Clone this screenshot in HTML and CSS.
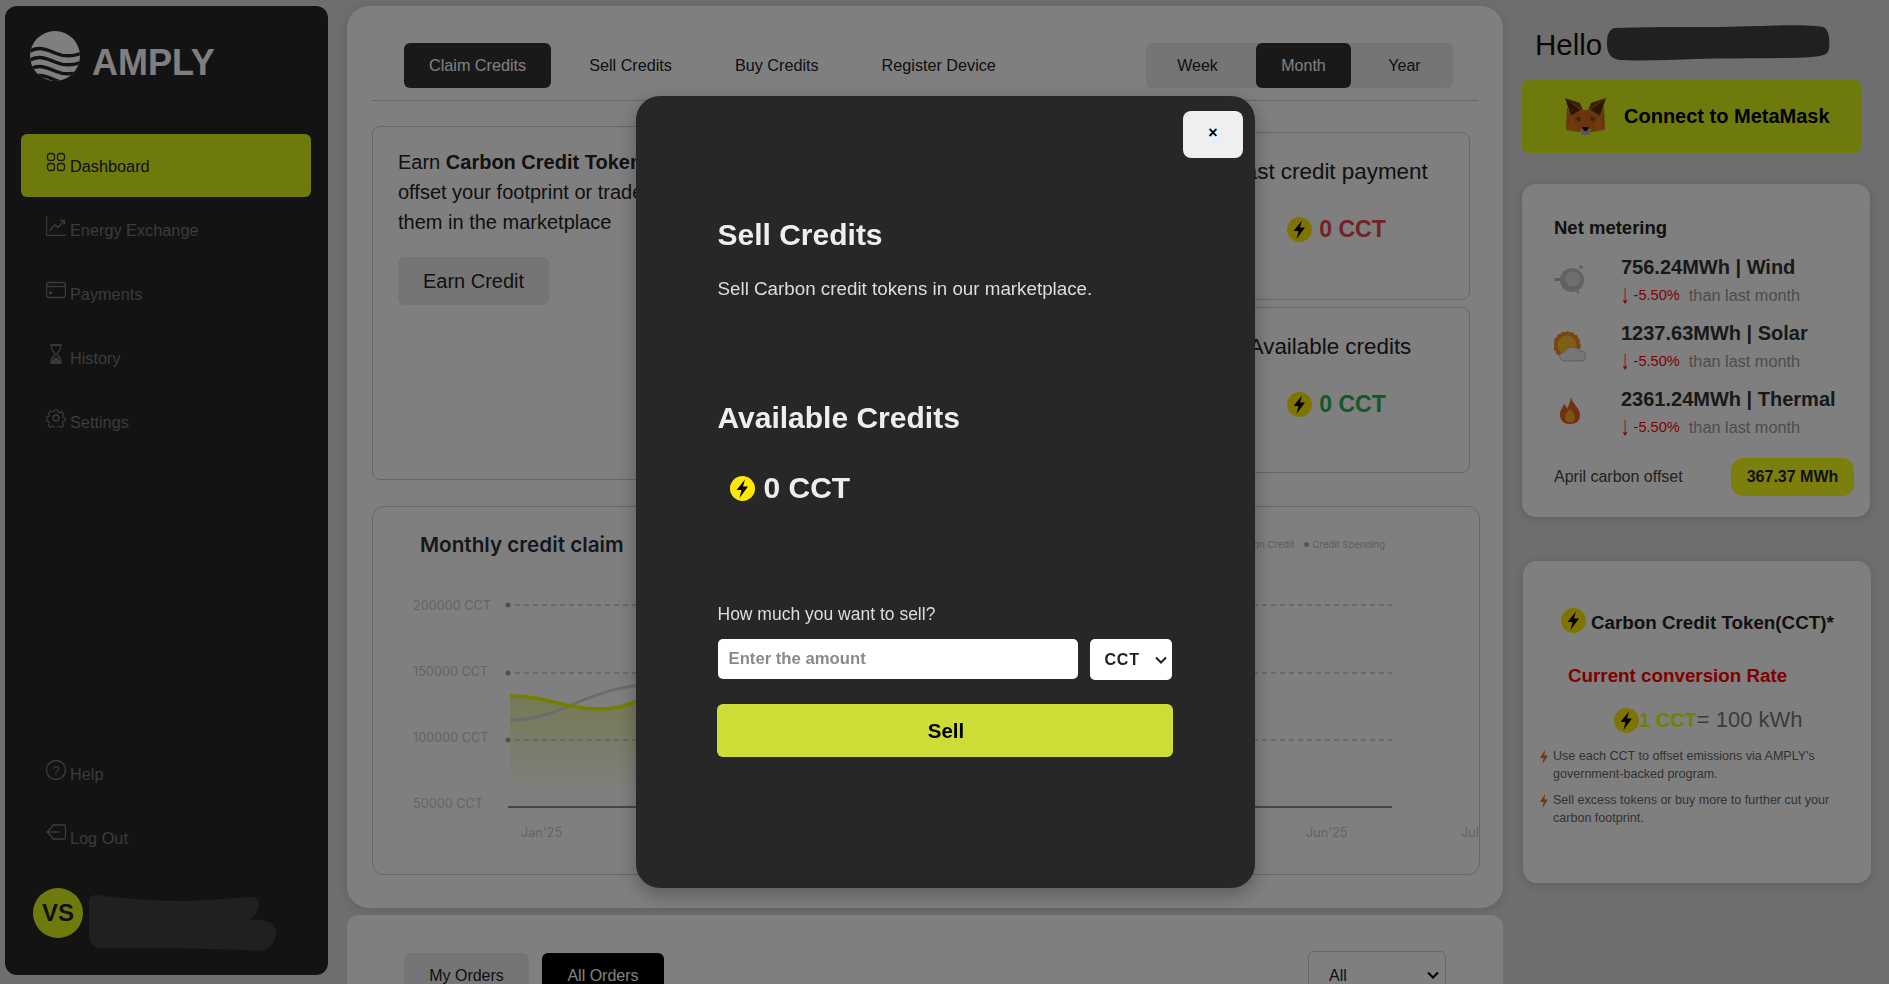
FILE: index.html
```html
<!DOCTYPE html>
<html lang="en">
<head>
    <title>AMPLY Dashboard</title>
    <link rel="stylesheet" href="styles.css">
</head>
<body>

    <aside class="sidebar">
        <div class="brand">
            <svg class="brand-logo" viewBox="0 0 50 50">
                <defs><clipPath id="logoclip"><circle cx="25" cy="25" r="25"/></clipPath></defs>
                <g clip-path="url(#logoclip)">
                    <rect width="50" height="50" fill="#fff"/>
                    <path d="M-2 21 C8 15 16 18 25 22 C34 26 42 26 52 22" class="logo-wave"/>
                    <path d="M-2 30 C8 24 16 27 25 31 C34 35 42 35 52 31" class="logo-wave"/>
                    <path d="M-2 39 C8 33 16 36 25 40 C34 44 42 44 52 40" class="logo-wave"/>
                    <path d="M-2 48 C8 42 16 45 25 49 C34 53 42 53 52 49" class="logo-wave"/>
                </g>
            </svg>
            <span class="brand-name">AMPLY</span>
        </div>

        <nav class="nav">
            <a class="nav-item active">
                <svg class="nav-icon" viewBox="0 0 20 20"><rect x="1.5" y="1.5" width="7" height="7" rx="2.5"/><rect x="11.5" y="1.5" width="7" height="7" rx="2.5"/><rect x="1.5" y="11.5" width="7" height="7" rx="2.5"/><rect x="11.5" y="11.5" width="7" height="7" rx="2.5"/></svg>
                Dashboard
            </a>
            <a class="nav-item">
                <svg class="nav-icon" viewBox="0 0 20 20"><path d="M.5 0V19.5H20"/><path d="M3.5 15L9 8.5l3 3L18 5"/><path d="M14.5 4.5H18.5V8.5"/></svg>
                Energy Exchange
            </a>
            <a class="nav-item">
                <svg class="nav-icon" viewBox="0 0 20 20"><rect x=".5" y="2.5" width="19" height="15" rx="2.5"/><path d="M.5 6.5H19.5"/><rect x="3" y="11.5" width="3" height="2.5" class="icon-solid"/></svg>
                Payments
            </a>
            <a class="nav-item">
                <svg class="nav-icon" viewBox="0 0 20 20"><path d="M4 1H16M4 19H16"/><path d="M5.5 1V4C5.5 7 9 8.500 9 10C9 11.500 5.500 13 5.500 16V19H14.500V16C14.500 13 11 11.500 11 10C11 8.500 14.500 7 14.500 4V1Z"/><path d="M6 18.500C6 15.500 9 14 10 13C11 14 14 15.500 14 18.500Z" class="icon-solid"/></svg>
                History
            </a>
            <a class="nav-item">
                <svg class="nav-icon" viewBox="0 0 20 20"><circle cx="10" cy="10" r="3"/><path d="M8.300 .8h3.400l.5 2.600 1.700.8 2.300-1.300 2.300 2.500-1.400 2.200.6 1.800 2.500.7v3.400l-2.500.6-.7 1.800 1.300 2.200-2.400 2.400-2.200-1.300-1.800.7-.6 2.300H8.300l-.6-2.400-1.700-.7-2.200 1.300-2.400-2.400 1.300-2.200-.7-1.700-2.300-.6V8.900l2.400-.6.700-1.800L1.500 4.400l2.400-2.500 2.200 1.300 1.700-.8z" transform="translate(1 1) scale(.9)"/></svg>
                Settings
            </a>
        </nav>

        <div class="sidebar-bottom">
            <a class="nav-item">
                <svg class="nav-icon" viewBox="0 0 20 20"><circle cx="10" cy="10" r="9.500"/><text x="10" y="14.500" class="help-mark">?</text></svg>
                Help
            </a>
            <a class="nav-item">
                <svg class="nav-icon" viewBox="0 0 20 20"><path d="M6 4V2.500C6 1.500 6.500 1 7.500 1H18C19 1 19.500 1.500 19.500 2.500V13.500C19.500 14.500 19 15 18 15H7.500C6.500 15 6 14.500 6 13.500V12"/><path d="M13 8H1M5 4L1 8l4 4"/></svg>
                Log Out
            </a>
            <div class="profile">
                <div class="avatar">VS</div>
                <svg class="redact-name" viewBox="0 0 189 56"><path d="M8 0C40 4 70 6 100 6C130 5 150 2 165 2C170 2 172 8 170 14C168 20 164 24 158 25C175 24 187 26 188 36C189 48 180 56 170 56C150 54 100 54 70 53C40 53 20 54 10 53C4 52 1 46 1 38V8C1 3 3 0 8 0Z"/></svg>
            </div>
        </div>
    </aside>

    <main class="content">
        <section class="main-card">
            <div class="tabs-row">
                <div class="tabs">
                    <button class="tab tab-active">Claim Credits</button>
                    <button class="tab">Sell Credits</button>
                    <button class="tab">Buy Credits</button>
                    <button class="tab">Register Device</button>
                </div>
                <div class="period">
                    <button class="period-btn period-week">Week</button>
                    <button class="period-btn period-month">Month</button>
                    <button class="period-btn period-year">Year</button>
                </div>
            </div>

            <div class="top-grid">
                <div class="earn-card">
                    <p class="earn-text">Earn <b>Carbon Credit Tokens</b> to<br>offset your footprint or trade<br>them in the marketplace</p>
                    <button class="earn-btn">Earn Credit</button>
                </div>
                <div class="stat-col">
                    <div class="stat-card stat-first">
                        <p class="stat-title">Last credit payment</p>
                        <div class="stat-value red">
                            <svg class="bolt" viewBox="0 0 25 25"><circle cx="12.500" cy="12.500" r="12.500" fill="#ffe900"/><path d="M15 3.500L6.500 14H11.500L9.500 22L18 10.500H13Z"/></svg>
                            0 CCT
                        </div>
                    </div>
                    <div class="stat-card">
                        <p class="stat-title">Available credits</p>
                        <div class="stat-value green">
                            <svg class="bolt" viewBox="0 0 25 25"><circle cx="12.500" cy="12.500" r="12.500" fill="#ffe900"/><path d="M15 3.500L6.500 14H11.500L9.500 22L18 10.500H13Z"/></svg>
                            0 CCT
                        </div>
                    </div>
                </div>
            </div>

            <div class="chart-card">
                <div class="chart-head">
                    <h3 class="chart-title">Monthly credit claim</h3>
                    <div class="legend">
                        <span class="legend-dot"></span>Carbon Credit
                        <span class="legend-dot legend-gap"></span>Credit Spending
                    </div>
                </div>
                <svg class="chart" viewBox="0 0 1106 314">
                    <defs>
                        <linearGradient id="areafill" x1="0" y1="0" x2="0" y2="1">
                            <stop offset="0" stop-color="#cfe01a" stop-opacity=".45"/>
                            <stop offset="1" stop-color="#cfe01a" stop-opacity="0"/>
                        </linearGradient>
                    </defs>
                    <text x="40" y="50" class="axis">200000 CCT</text>
                    <text x="40" y="116" class="axis">150000 CCT</text>
                    <text x="40" y="182" class="axis">100000 CCT</text>
                    <text x="40" y="248" class="axis">50000 CCT</text>
                    <circle cx="135" cy="45" r="2.500" class="grid-dot"/>
                    <circle cx="135" cy="113" r="2.500" class="grid-dot"/>
                    <circle cx="135" cy="180" r="2.500" class="grid-dot"/>
                    <path d="M142 45H1019M142 113H1019M142 180H1019" class="grid-line"/>
                    <path d="M135 247H1019" class="base-line"/>
                    <path d="M137 136C175 136 190 149 228 149C255 149 275 137 300 118V234H137Z" fill="url(#areafill)"/>
                    <path d="M137 160C195 160 210 123 300 123" class="line-grey"/>
                    <path d="M137 136C175 136 190 149 228 149C255 149 275 137 300 118" class="line-green"/>
                    <text x="148" y="277" class="axis">Jan'25</text>
                    <text x="933" y="277" class="axis">Jun'25</text>
                    <text x="1088" y="277" class="axis">Jul</text>
                </svg>
            </div>
        </section>

        <section class="orders-card">
            <div class="orders-tabs">
                <button class="order-tab">My Orders</button>
                <button class="order-tab order-active">All Orders</button>
            </div>
            <select class="orders-filter"><option>All</option></select>
        </section>
    </main>

    <aside class="right">
        <div class="hello">
            <span>Hello</span>
            <svg class="redact-hello" viewBox="0 0 223 36"><path d="M8 3C60 1 100 3 150 1C180 0 205 0 216 2C222 4 223 14 222 24C221 30 215 31 205 32C170 34 120 33 90 34C60 35 30 36 12 35C3 33 0 28 0 18C0 10 2 4 8 3Z"/></svg>
        </div>

        <button class="metamask">
            <svg class="fox" viewBox="0 0 41 37">
                <path d="M41 0L23 13l3-8z" fill="#763d16"/>
                <path d="M0 0l18 13-3-8z" fill="#763d16"/>
                <path d="M0 0l6 18 10-6z" fill="#5b2c0e"/>
                <path d="M41 0l-6 18-10-6z" fill="#5b2c0e"/>
                <path d="M6 18L2 8l-1 24 6-3 7 5h13l7-5 6 3-1-24-4 10-10-6H16z" fill="#d5691a"/>
                <path d="M1 32l6-14 7 16zM40 32l-6-14-7 16z" fill="#e2761b"/>
                <path d="M10 20l6-1-2 5zM31 20l-6-1 2 5z" fill="#763d16"/>
                <path d="M14 31h13l-3 6h-7z" fill="#c0ad9e"/>
                <path d="M17 29h7l-2 4h-3z" fill="#161616"/>
            </svg>
            Connect to MetaMask
        </button>

        <section class="side-card net-card">
            <h4 class="net-title">Net metering</h4>

            <div class="net-row">
                <svg class="net-icon" viewBox="0 0 32 32"><rect x="0" y="13" width="14" height="3" rx="1.500" fill="#bbb"/><circle cx="18" cy="15" r="12" fill="#c4c4c4"/><circle cx="19" cy="14" r="7.500" fill="#dedede"/><circle cx="27" cy="2" r="2" fill="#c4c4c4"/><circle cx="24" cy="27" r="1.500" fill="#c4c4c4"/></svg>
                <div>
                    <p class="net-value">756.24MWh | Wind</p>
                    <p class="net-sub"><span class="down"><span class="arrow">↓</span> -5.50%</span><span class="than">than last month</span></p>
                </div>
            </div>

            <div class="net-row">
                <svg class="net-icon" viewBox="0 0 32 32"><circle cx="13" cy="14" r="13" fill="#f08a1e" stroke="#f08a1e" stroke-width="1.500" stroke-dasharray="3 2"/><circle cx="13" cy="14" r="9.500" fill="#fbc02d"/><path d="M11 30C4 30 4 21 11 21C13 15 24 15 26 20C33 19 34 30 27 30Z" fill="#ececf2" stroke="#bbb"/></svg>
                <div>
                    <p class="net-value">1237.63MWh | Solar</p>
                    <p class="net-sub"><span class="down"><span class="arrow">↓</span> -5.50%</span><span class="than">than last month</span></p>
                </div>
            </div>

            <div class="net-row">
                <svg class="net-icon" viewBox="0 0 32 32"><path d="M17 0C18 6 25 10 26 17C26.500 24 22 27 16 27C10 27 6 24 6 17C6 13 9 10 10 7C12 9 13 10 13 12C15 8 16 5 17 0Z" fill="#e8601c"/><path d="M16 11C17 15 21 16 21 20C21 24 19 25 16 25C13 25 11 24 11 20C11 16 15 15 16 11Z" fill="#f9a825"/></svg>
                <div>
                    <p class="net-value">2361.24MWh | Thermal</p>
                    <p class="net-sub"><span class="down"><span class="arrow">↓</span> -5.50%</span><span class="than">than last month</span></p>
                </div>
            </div>

            <div class="offset-row">
                <span>April carbon offset</span>
                <span class="offset-badge">367.37 MWh</span>
            </div>
        </section>

        <section class="side-card token-card">
            <div class="token-title">
                <svg class="bolt bolt-up" viewBox="0 0 25 25"><circle cx="12.500" cy="12.500" r="12.500" fill="#ffe900"/><path d="M15 3.500L6.500 14H11.500L9.500 22L18 10.500H13Z"/></svg>
                Carbon Credit Token(CCT)*
            </div>
            <p class="rate-title">Current conversion Rate</p>
            <div class="rate">
                <svg class="bolt" viewBox="0 0 25 25"><circle cx="12.500" cy="12.500" r="12.500" fill="#ffe900"/><path d="M15 3.500L6.500 14H11.500L9.500 22L18 10.500H13Z"/></svg>
                <b class="rate-cct">1 CCT</b>= 100 kWh
            </div>
            <ul class="token-list">
                <li>
                    <svg class="flash" viewBox="0 0 8 14"><path d="M5 0L0 8H3.500L2.500 14L8 5.500H4.500Z"/></svg>
                    <span>Use each CCT to offset emissions via AMPLY's government-backed program.</span>
                </li>
                <li>
                    <svg class="flash" viewBox="0 0 8 14"><path d="M5 0L0 8H3.500L2.500 14L8 5.500H4.500Z"/></svg>
                    <span>Sell excess tokens or buy more to further cut your carbon footprint.</span>
                </li>
            </ul>
        </section>
    </aside>

    <div class="overlay">
        <div class="modal">
            <button class="modal-close">×</button>
            <h2 class="modal-title first">Sell Credits</h2>
            <p class="modal-sub">Sell Carbon credit tokens in our marketplace.</p>
            <h2 class="modal-title second">Available Credits</h2>
            <div class="modal-amount">
                <svg class="bolt" viewBox="0 0 25 25"><circle cx="12.500" cy="12.500" r="12.500" fill="#ffe900"/><path d="M15 3.500L6.500 14H11.500L9.500 22L18 10.500H13Z"/></svg>
                0 CCT
            </div>
            <label class="modal-label">How much you want to sell?</label>
            <div class="modal-form">
                <input class="modal-input" placeholder="Enter the amount">
                <select class="modal-select"><option>CCT</option></select>
            </div>
            <button class="sell-btn">Sell</button>
        </div>
    </div>

</body>
</html>
```

FILE: styles.css
```css
* {
    box-sizing: border-box;
}
p, h2, h3, h4, ul {
    margin: 0;
    padding: 0;
}
button, select, input {
    font-family: inherit;
}
body {
    margin: 0;
    height: 100vh;
    overflow: hidden;
    display: flex;
    gap: 19px;
    padding: 6px 18px 0 5px;
    background-color: #dcdcdc;
    font-family: "Liberation Sans", Arial, sans-serif;
    color: #222;
}

/* sidebar */
.sidebar {
    width: 323px;
    flex: none;
    height: 969px;
    background-color: #262626;
    border-radius: 12px;
    padding: 25px 17px 24px 16px;
    display: flex;
    flex-direction: column;
}
.brand {
    display: flex;
    align-items: center;
    gap: 12px;
    padding-left: 9px;
    height: 50px;
    margin-bottom: 53px;
}
.brand-logo {
    width: 50px;
    height: 50px;
}
.logo-wave {
    fill: none;
    stroke: #262626;
    stroke-width: 3.5;
}
.brand-name {
    color: #fff;
    font-size: 36px;
    font-weight: bold;
    margin-top: 14px;
}
.nav {
    display: flex;
    flex-direction: column;
}
.nav-item {
    height: 63px;
    margin-bottom: 1px;
    display: flex;
    align-items: center;
    gap: 4px;
    padding: 2px 0 0 25px;
    font-size: 16.3px;
    color: #777;
    border-radius: 6px;
}
.nav-item.active {
    background-color: #def41a;
    color: #222;
}
.nav-icon {
    width: 20px;
    height: 20px;
    margin-top: -10px;
    fill: none;
    stroke: #777;
    stroke-width: 1.3;
    flex: none;
}
.active .nav-icon {
    stroke: #333;
}
.icon-solid {
    fill: #777;
    stroke: none;
}
.help-mark {
    fill: #777;
    stroke: none;
    font-size: 13px;
    text-anchor: middle;
}
.sidebar-bottom {
    margin-top: auto;
}
.profile {
    display: flex;
    align-items: flex-start;
    gap: 5px;
    margin-top: 19px;
    padding-left: 12px;
    height: 63px;
}
.avatar {
    width: 50px;
    height: 50px;
    flex: none;
    border-radius: 50%;
    background-color: #def41a;
    color: #222;
    font-size: 24px;
    font-weight: bold;
    display: flex;
    align-items: center;
    justify-content: center;
}
.redact-name {
    width: 189px;
    height: 56px;
    margin-top: 7px;
    fill: #404040;
}

/* main column */
.content {
    width: 1156px;
    flex: none;
    display: flex;
    flex-direction: column;
    gap: 7px;
}
.main-card {
    flex: none;
    height: 902px;
    background-color: #fff;
    border-radius: 22px;
    padding: 37px 25px 0;
    box-shadow: 0 2px 10px rgba(0, 0, 0, .12);
}
.tabs-row {
    display: flex;
    justify-content: space-between;
    padding: 0 25px 12px 32px;
    border-bottom: 1px solid #ccc;
}
.tabs {
    display: flex;
    gap: 13px;
}
.tab {
    height: 45px;
    padding: 0 25px;
    border: none;
    border-radius: 6px;
    background: transparent;
    color: #222;
    font-size: 16.2px;
}
.tab-active {
    background-color: #333;
    color: #fff;
}
.period {
    width: 307px;
    height: 45px;
    display: flex;
    background-color: #ebebeb;
    border-radius: 6px;
}
.period-btn {
    border: none;
    background: transparent;
    border-radius: 6px;
    color: #222;
    font-size: 16px;
}
.period-week {
    width: 110px;
    padding: 0 7px 0 0;
}
.period-month {
    width: 95px;
    background-color: #333;
    color: #fff;
}
.period-year {
    width: 102px;
    padding: 0 0 0 5px;
}
.top-grid {
    display: flex;
    gap: 10px;
    height: 354px;
    margin: 25px 8px 0 0;
}
.earn-card {
    flex: 1;
    border: 1px solid #ccc;
    border-radius: 8px;
    padding: 20px 25px;
}
.earn-text {
    font-size: 20px;
    line-height: 30px;
    color: #222;
}
.earn-btn {
    display: block;
    width: 151px;
    height: 48px;
    margin-top: 20px;
    border: none;
    border-radius: 6px;
    background-color: #ebebeb;
    color: #222;
    font-size: 20px;
}
.stat-col {
    width: 294px;
    flex: none;
    display: flex;
    flex-direction: column;
    gap: 7px;
    padding-top: 6px;
}
.stat-card {
    height: 166px;
    border: 1px solid #ccc;
    border-radius: 8px;
    padding-top: 23px;
    display: flex;
    flex-direction: column;
    align-items: center;
}
.stat-first {
    height: 168px;
}
.stat-title {
    margin-left: 14px;
    font-size: 22.4px;
    line-height: 32px;
    color: #222;
}
.stat-value {
    display: flex;
    align-items: center;
    gap: 7px;
    margin: 28px 0 0 27px;
    font-size: 23px;
    font-weight: bold;
}
.red {
    color: #e8404f;
}
.green {
    color: #28b050;
}
.bolt {
    width: 25px;
    height: 25px;
    flex: none;
}
.chart-card {
    height: 369px;
    margin: 26px -2px 0 0;
    border: 1px solid #ccc;
    border-radius: 12px;
    overflow: hidden;
}
.chart-head {
    display: flex;
    justify-content: space-between;
    align-items: center;
    padding: 24px 94px 1px 47px;
}
.chart-title {
    font-family: Inter, sans-serif;
    font-size: 20.7px;
    font-weight: 600;
    line-height: 28px;
    color: #2a2f3a;
}
.legend {
    display: flex;
    align-items: center;
    margin-top: -2px;
    font-family: Inter, sans-serif;
    font-size: 9.5px;
    color: #bbb;
}
.legend-dot {
    width: 5px;
    height: 5px;
    border-radius: 50%;
    background-color: #aaa;
    margin-right: 4px;
}
.legend-gap {
    margin-left: 9px;
}
.chart {
    display: block;
    width: 1106px;
    height: 314px;
}
.axis {
    font-family: Inter, sans-serif;
    font-size: 12.7px;
    fill: #c8c8c8;
}
.grid-dot {
    fill: #a0a0a0;
}
.grid-line {
    fill: none;
    stroke: #a8a8a8;
    stroke-dasharray: 5 4;
}
.base-line {
    stroke: #666;
    stroke-width: 1.5;
}
.line-grey {
    fill: none;
    stroke: #d8d8d8;
    stroke-width: 3;
}
.line-green {
    fill: none;
    stroke: #e8ff00;
    stroke-width: 3.5;
}
.orders-card {
    flex: none;
    height: 200px;
    background-color: #fff;
    border-radius: 12px;
    padding: 36px 57px 0;
    display: flex;
    justify-content: space-between;
    align-items: flex-start;
}
.orders-tabs {
    display: flex;
    gap: 13px;
    margin-top: 2px;
}
.order-tab {
    height: 45px;
    width: 125px;
    border: none;
    border-radius: 6px;
    background-color: #ebebeb;
    color: #222;
    font-size: 16px;
}
.order-active {
    width: 122px;
    background-color: #000;
    color: #fff;
}
.orders-filter {
    appearance: none;
    width: 138px;
    height: 48px;
    padding-left: 20px;
    border: 1px solid #ccc;
    border-radius: 6px;
    background: #fff url("data:image/svg+xml,%3Csvg xmlns='http://www.w3.org/2000/svg' viewBox='0 0 12 8'%3E%3Cpath d='M1 1.500l5 5 5-5' fill='none' stroke='%23000' stroke-width='2'/%3E%3C/svg%3E") no-repeat right 6px center / 12px 8px;
    color: #222;
    font-size: 16px;
}

/* right column */
.right {
    width: 349px;
    flex: none;
}
.hello {
    display: flex;
    align-items: center;
    gap: 5px;
    height: 36px;
    margin-top: 20px;
    padding: 1px 0 0 13px;
    font-size: 29.5px;
    color: #111;
}
.redact-hello {
    width: 223px;
    height: 36px;
    fill: #404040;
    margin-top: -4px;
}
.metamask {
    width: 339px;
    height: 73px;
    margin-top: 18px;
    display: flex;
    align-items: center;
    gap: 18px;
    padding: 0 0 0 43px;
    border: none;
    border-radius: 6px;
    background-color: #def41a;
    color: #000;
    font-size: 20px;
    font-weight: bold;
}
.fox {
    width: 41px;
    height: 37px;
    flex: none;
}
.side-card {
    width: 348px;
    background-color: #fff;
    border-radius: 14px;
    box-shadow: 0 2px 8px rgba(0, 0, 0, .15);
}
.net-card {
    height: 333px;
    margin-top: 31px;
    padding: 33px 16px 0 32px;
}
.net-title {
    font-size: 18.5px;
    line-height: 22px;
    color: #222;
}
.net-row {
    display: flex;
    align-items: center;
    height: 53px;
    margin-top: 13px;
}
.net-row:first-of-type {
    margin-top: 15px;
}
.net-icon {
    width: 32px;
    height: 32px;
    margin-right: 35px;
    flex: none;
}
.net-value {
    font-size: 20px;
    font-weight: bold;
    line-height: 26px;
    color: #333;
}
.net-sub {
    font-size: 16.3px;
    line-height: 24px;
    margin-top: 3px;
    display: flex;
    gap: 9px;
}
.down {
    color: #ff0000;
    font-size: 14.6px;
}
.arrow {
    display: inline-block;
    font-size: 17px;
    transform: scale(1, 1.6);
}
.than {
    color: #999;
}
.offset-row {
    display: flex;
    justify-content: space-between;
    align-items: center;
    margin-top: 19px;
    font-size: 16px;
    color: #444;
}
.offset-badge {
    width: 123px;
    height: 38px;
    display: flex;
    align-items: center;
    justify-content: center;
    border-radius: 12px;
    background-color: #faff19;
    color: #222;
    font-weight: bold;
}
.token-card {
    height: 322px;
    margin: 44px 0 0 1px;
    padding: 49px 17px 0;
}
.token-title {
    display: flex;
    align-items: center;
    gap: 5px;
    padding-left: 21px;
    font-size: 18.8px;
    font-weight: bold;
    line-height: 26px;
    color: #222;
}
.bolt-up {
    margin-top: -5px;
}
.rate-title {
    margin: 28px 0 0 28px;
    font-size: 18.8px;
    font-weight: bold;
    line-height: 24px;
    color: #ff0000;
}
.rate {
    display: flex;
    align-items: center;
    margin-top: 19px;
    padding-left: 74px;
    font-size: 22px;
    color: #777;
}
.rate-cct {
    color: #e6ff00;
    font-size: 20px;
}
.token-list {
    list-style: none;
    margin-top: 14px;
}
.token-list li {
    display: flex;
    gap: 5px;
    margin-bottom: 8px;
    font-size: 12.55px;
    line-height: 18px;
    color: #666;
}
.flash {
    width: 8px;
    height: 14px;
    flex: none;
    margin-top: 3px;
    fill: #e8701c;
}

/* modal */
.overlay {
    position: fixed;
    inset: 0;
    display: flex;
    align-items: center;
    justify-content: center;
    padding-left: 1px;
    background-color: rgba(0, 0, 0, .5);
}
.modal {
    position: relative;
    width: 619px;
    height: 792px;
    padding: 0 83px 0 82px;
    background-color: #272727;
    border-radius: 24px;
    box-shadow: 0 6px 20px rgba(0, 0, 0, .3);
    color: #eee;
}
.modal-close {
    position: absolute;
    top: 15px;
    right: 12px;
    width: 60px;
    height: 47px;
    padding: 0 0 4px 1px;
    border: none;
    border-radius: 8px;
    background-color: #efefef;
    color: #000;
    font-size: 16px;
    font-weight: bold;
}
.modal-title {
    font-size: 30px;
    line-height: 34px;
    font-weight: bold;
    color: #eee;
}
.first {
    margin-top: 122px;
}
.second {
    margin-top: 101px;
}
.modal-sub {
    margin-top: 26px;
    font-size: 18.8px;
    line-height: 22px;
    color: #ddd;
}
.modal-amount {
    display: flex;
    align-items: center;
    gap: 9px;
    height: 36px;
    margin-top: 35px;
    padding-left: 12px;
    font-size: 30px;
    font-weight: bold;
    color: #eee;
}
.modal-label {
    display: block;
    margin-top: 97px;
    font-size: 17.5px;
    line-height: 22px;
    color: #ddd;
}
.modal-form {
    display: flex;
    gap: 12px;
    margin-top: 14px;
}
.modal-input {
    flex: 1;
    min-width: 0;
    height: 40px;
    padding: 0 11px 1px;
    border: none;
    border-radius: 5px;
    background-color: #fff;
    font-size: 16.7px;
    font-weight: bold;
}
.modal-input::placeholder {
    color: #8a8a8a;
}
.modal-select {
    appearance: none;
    width: 82px;
    height: 41px;
    padding-left: 15px;
    border: none;
    border-radius: 5px;
    background: #fff url("data:image/svg+xml,%3Csvg xmlns='http://www.w3.org/2000/svg' viewBox='0 0 12 8'%3E%3Cpath d='M1 1.500l5 5 5-5' fill='none' stroke='%23222' stroke-width='2'/%3E%3C/svg%3E") no-repeat right 5px center / 12px 8px;
    color: #222;
    font-size: 16px;
    font-weight: bold;
    letter-spacing: .8px;
}
.sell-btn {
    display: block;
    width: 456px;
    height: 53px;
    margin: 24px 0 0 -1px;
    padding: 0 0 0 3px;
    border: none;
    border-radius: 6px;
    background-color: #cedc38;
    color: #000;
    font-size: 20.5px;
    font-weight: bold;
}
```
